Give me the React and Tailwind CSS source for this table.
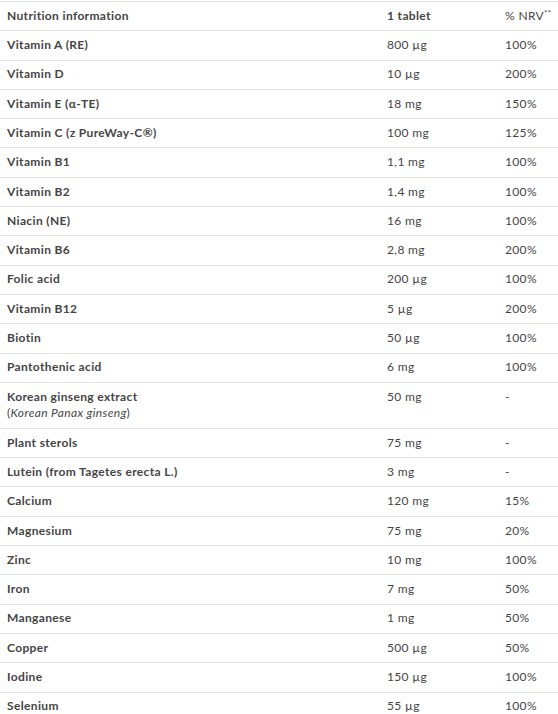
import React from "react";

const rows = [
  ["Vitamin A (RE)", "800 µg", "100%"],
  ["Vitamin D", "10 µg", "200%"],
  ["Vitamin E (α-TE)", "18 mg", "150%"],
  ["Vitamin C (z PureWay-C®)", "100 mg", "125%"],
  ["Vitamin B1", "1,1 mg", "100%"],
  ["Vitamin B2", "1,4 mg", "100%"],
  ["Niacin (NE)", "16 mg", "100%"],
  ["Vitamin B6", "2,8 mg", "200%"],
  ["Folic acid", "200 µg", "100%"],
  ["Vitamin B12", "5 µg", "200%"],
  ["Biotin", "50 µg", "100%"],
  ["Pantothenic acid", "6 mg", "100%"],
  ["KOREAN", "50 mg", "-"],
  ["Plant sterols", "75 mg", "-"],
  ["Lutein (from Tagetes erecta L.)", "3 mg", "-"],
  ["Calcium", "120 mg", "15%"],
  ["Magnesium", "75 mg", "20%"],
  ["Zinc", "10 mg", "100%"],
  ["Iron", "7 mg", "50%"],
  ["Manganese", "1 mg", "50%"],
  ["Copper", "500 µg", "50%"],
  ["Iodine", "150 µg", "100%"],
  ["Selenium", "55 µg", "100%"],
];

const rowCls =
  "grid grid-cols-[380px_118px_1fr] border-b border-[#e2e2e2] text-[12px] leading-[16.7px] py-[5.8px] tracking-[0.35px]";

export default function App() {
  return (
    <div
      className="w-[558px] bg-white text-[#454545] pt-px"
      style={{ fontFamily: "Lato, 'Noto Sans', sans-serif" }}
    >
      <div className="border-t border-[#e2e2e2]">
        <div className={rowCls}>
          <div className="pl-[7px] font-bold">Nutrition information</div>
          <div className="pl-[7px] font-bold">1 tablet</div>
          <div className="pl-[7px] whitespace-nowrap">
            % NRV
            <span className="text-[8px] relative top-[-4px] leading-none">**</span>
          </div>
        </div>
        {rows.map(([name, amt, nrv]) => (
          <div key={name} className={rowCls}>
            <div className="pl-[7px] font-bold">
              {name === "KOREAN" ? (
                <>
                  Korean ginseng extract
                  <div className="font-normal">
                    (<span className="italic">Korean Panax ginseng</span>)
                  </div>
                </>
              ) : (
                name
              )}
            </div>
            <div className="pl-[7px]">{amt}</div>
            <div className="pl-[7px]">{nrv}</div>
          </div>
        ))}
      </div>
    </div>
  );
}
